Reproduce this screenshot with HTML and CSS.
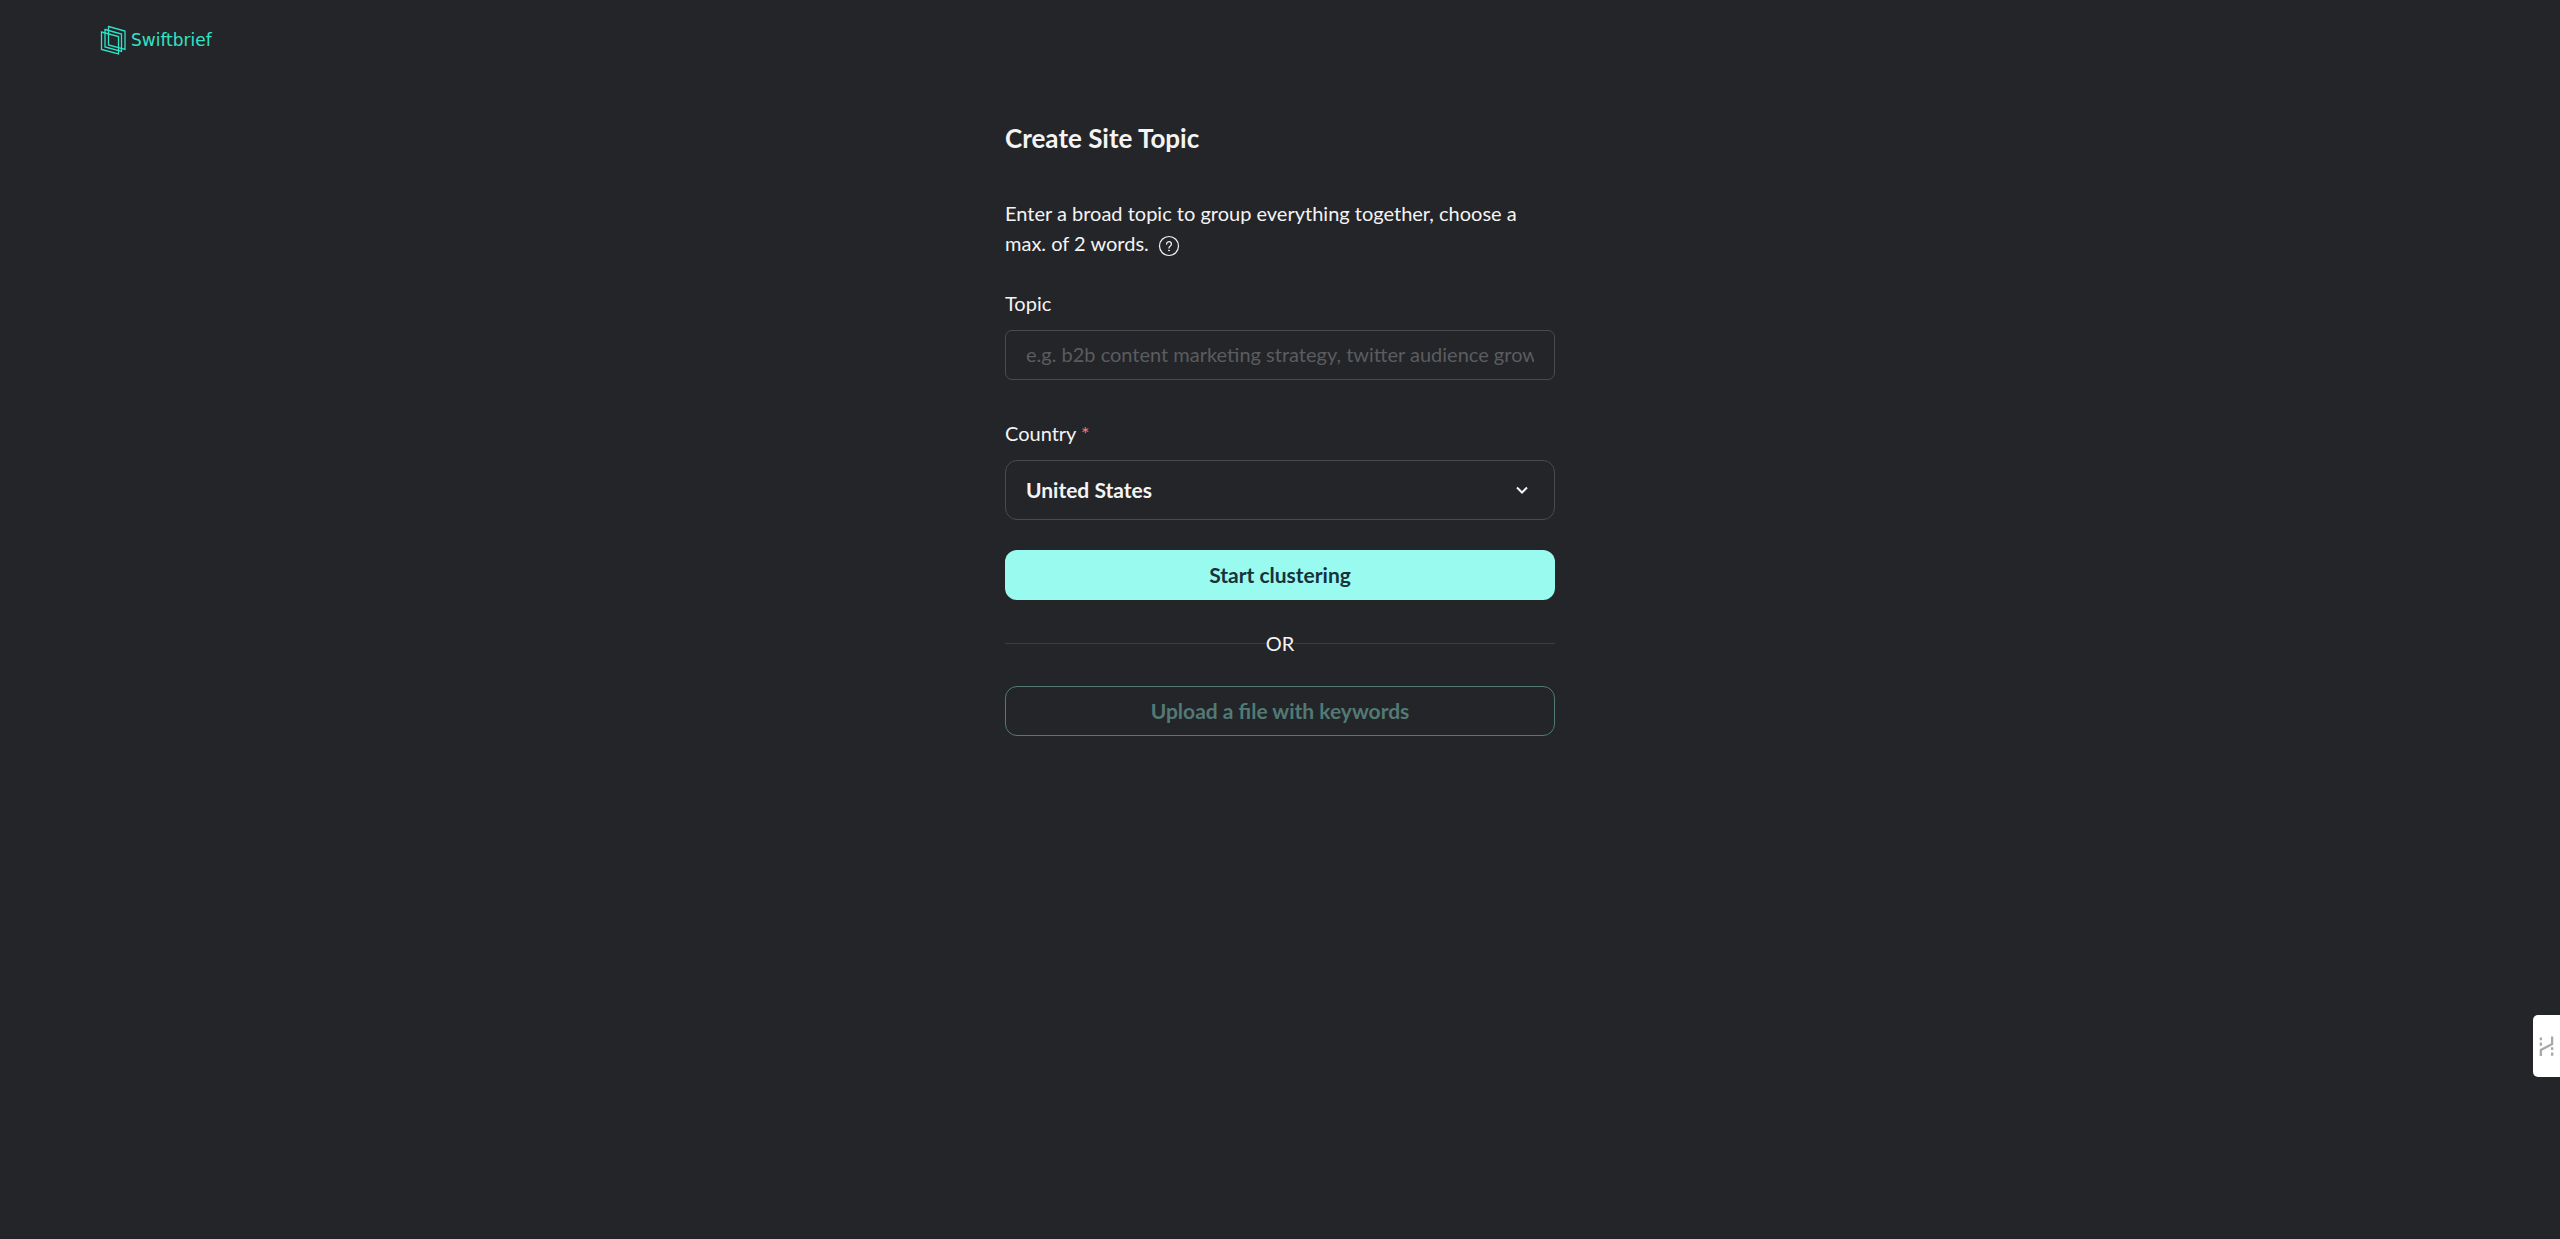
FILE: index.html
```html
<!DOCTYPE html>
<html lang="en">

<head>
  <meta charset="UTF-8" />
  <meta name="viewport" content="width=device-width, initial-scale=1.0" />
  <title>Create Site Topic - Swiftbrief</title>
  <link rel="stylesheet" href="styles.css">
</head>

<body>
  <header class="header">
    <a href="#" class="logo">
      <svg class="logo-icon" viewBox="0 0 26 30" fill="none" stroke="currentColor" stroke-width="1.3" aria-hidden="true">
        <path d="M8.500 1.500 25 6V24.500L8.500 20z" />
        <path d="M5 4.500 21.500 9V26.500L5 22z" />
        <path d="M1.500 7 18.500 11.500V29L1.500 24.500z" />
      </svg>
      <span>Swiftbrief</span>
    </a>
  </header>

  <main class="content">
    <h1>Create Site Topic</h1>

    <p class="description">
      Enter a broad topic to group everything together, choose a max. of 2 words.
      <button type="button" class="help" aria-label="Help">
        <svg viewBox="0 0 22 22" fill="none" stroke="currentColor" stroke-linecap="round" aria-hidden="true">
          <circle cx="11" cy="11" r="9.500" stroke-width="1.200" />
          <path d="M8.600 9a2.400 2.400 0 1 1 3.800 2c-.9.6-1.400 1-1.400 2" stroke-width="1.300" />
          <circle cx="11" cy="15.500" r=".5" fill="currentColor" stroke-width=".8" />
        </svg>
      </button>
    </p>

    <form id="topicForm">
      <label for="topic">Topic</label>
      <input type="text" id="topic" name="topic" placeholder="e.g. b2b content marketing strategy, twitter audience growth" />

      <label for="country">Country <span class="required">*</span></label>
      <div class="select-wrap">
        <select id="country" name="country" required>
          <option>United States</option>
          <option>United Kingdom</option>
          <option>Canada</option>
          <option>Australia</option>
        </select>
        <svg class="chevron" viewBox="0 0 14 14" fill="none" stroke="currentColor" stroke-width="2" aria-hidden="true">
          <path d="M2 4.500 7 9.500 12 4.500" />
        </svg>
      </div>

      <button type="submit" class="btn btn-primary">Start clustering</button>
      <div class="divider">OR</div>
      <button type="button" class="btn btn-outline">Upload a file with keywords</button>
    </form>
  </main>

  <button type="button" class="side-tab" aria-label="Feedback">
    <svg viewBox="0 0 16 22" fill="none" stroke="currentColor" stroke-width="2.500" aria-hidden="true">
      <path d="M2 21.500v-6.500L14 8.500V.5" />
      <path d="M2 10.500V7M2 4.500V1.500M14 12v3M14 17.500v3.500" />
    </svg>
  </button>
</body>

</html>
```

FILE: styles.css
```css
* {
  box-sizing: border-box;
}

body {
  font-family: Lato, "Open Sans", sans-serif;
  font-size: 20px;
  line-height: 30px;
  margin: 0;
  min-height: 100vh;
  background-color: #242529;
  color: #f4f4f4;
  border-bottom: 2px solid #2b1f29;
}

.header {
  display: flex;
  align-items: center;
  height: 80px;
  padding: 0 100px;
}

.logo {
  display: flex;
  align-items: center;
  gap: 5px;
  color: #2fe3c6;
  font-family: "DejaVu Sans", sans-serif;
  font-size: 17px;
  text-decoration: none;
}

.logo-icon {
  width: 26px;
  height: 30px;
}

.content {
  width: 100%;
  max-width: 550px;
  margin: 0 auto;
  padding: 40px 0;
}

h1 {
  font-size: 26px;
  line-height: 36px;
  font-weight: bold;
  margin: 0 0 42px;
}

.description {
  margin: 0 0 30px;
}

.help {
  width: 22px;
  height: 22px;
  margin-left: 4px;
  padding: 0;
  border: none;
  background: none;
  color: inherit;
  vertical-align: middle;
  cursor: pointer;
}

.help svg,
.side-tab svg {
  display: block;
}

label {
  display: block;
  margin-bottom: 12px;
}

.required {
  color: #f27b72;
}

input,
select {
  display: block;
  width: 100%;
  border: 1px solid #4a4b4f;
  background-color: transparent;
  color: #f4f4f4;
  font-family: inherit;
}

input {
  height: 50px;
  padding: 0 20px 2px;
  border-radius: 7px;
  font-size: 20px;
  margin-bottom: 38px;
}

input::placeholder {
  color: #5b5c5f;
}

.select-wrap {
  display: grid;
  align-items: center;
  margin-bottom: 30px;
}

/* arrow shares the grid cell with the select */
.select-wrap > * {
  grid-area: 1 / 1;
}

select {
  height: 60px;
  padding: 0 20px 2px;
  border-radius: 12px;
  font-size: 21px;
  font-weight: bold;
  appearance: none;
}

select option {
  background-color: #242529;
}

.chevron {
  width: 14px;
  height: 14px;
  justify-self: end;
  margin-right: 26px;
  pointer-events: none;
}

.btn {
  display: block;
  width: 100%;
  height: 50px;
  padding: 0 20px 2px;
  border-radius: 12px;
  font-family: inherit;
  font-size: 21px;
  font-weight: bold;
  cursor: pointer;
}

.btn-primary {
  border: none;
  background-color: #99fbf0;
  color: #16323a;
}

.btn-outline {
  border: 1px solid #527a75;
  background-color: transparent;
  color: #527a75;
}

.divider {
  display: flex;
  align-items: center;
  margin: 28px 0;
}

.divider::before,
.divider::after {
  content: "";
  flex: 1;
  height: 1px;
  background-color: #393e42;
}

.side-tab {
  position: fixed;
  right: 0;
  bottom: 162px;
  width: 27px;
  height: 62px;
  padding: 0 6px;
  border: none;
  border-radius: 5px 0 0 5px;
  background-color: #fff;
  color: #a9a9ab;
  cursor: pointer;
}
```
